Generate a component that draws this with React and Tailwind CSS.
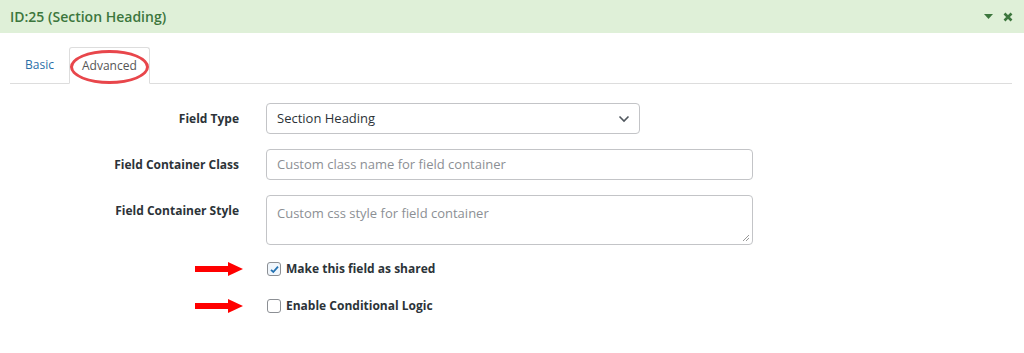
import React from 'react';

function Arrow() {
    return (
        <svg width="48" height="14" viewBox="0 0 48 14" className="block">
            <rect x="0" y="4" width="34" height="6" fill="#ff0000" />
            <polygon points="33,0 48,7 33,14" fill="#ff0000" />
        </svg>
    );
}

function CheckRow({ checked, label }) {
    return (
        <div className="flex items-center h-[20px]">
            <div className="w-[233px] flex justify-end">
                <Arrow />
            </div>
            <div className="ml-[24px] flex items-center gap-[5px]">
                <span
                    className={
                        'w-[14px] h-[14px] rounded-[3px] border flex items-center justify-center ' +
                        (checked ? 'border-[#8c8f94] bg-[#f0f6fc]' : 'border-[#8c8f94] bg-white')
                    }
                >
                    {checked && (
                        <svg width="11" height="11" viewBox="0 0 11 11">
                            <path d="M2 5.8 L4.3 8 L9 2.6" fill="none" stroke="#2271b1" strokeWidth="1.8" />
                        </svg>
                    )}
                </span>
                <span className="text-[12px] font-bold text-[#2c3338]">{label}</span>
            </div>
        </div>
    );
}

function FieldRow({ label, children, top }) {
    return (
        <div className={'flex ' + (top ? 'items-start' : 'items-center')}>
            <label
                className={
                    'w-[229px] text-right text-[12px] font-bold text-[#2c3338] ' + (top ? 'pt-[7px]' : '')
                }
            >
                {label}
            </label>
            <div className="ml-[27px]">{children}</div>
        </div>
    );
}

export default function App() {
    return (
        <div className="w-[1024px] h-[353px] bg-white overflow-hidden" style={{ fontFamily: '"Open Sans", sans-serif' }}>
            <div className="h-[33px] bg-[#dff0d8] flex items-center justify-between pl-[10px] pr-[11px]">
                <span className="text-[14px] font-semibold text-[#3c763d]">ID:25 (Section Heading)</span>
                <div className="flex items-center gap-[10px] text-[#3c763d]">
                    <svg width="9" height="6" viewBox="0 0 9 6">
                        <polygon points="0,0 9,0 4.5,5" fill="#3c763d" />
                    </svg>
                    <svg width="10" height="10" viewBox="0 0 10 10">
                        <path d="M1.5 1.5 L8.5 8.5 M8.5 1.5 L1.5 8.5" stroke="#3c763d" strokeWidth="2.6" />
                    </svg>
                </div>
            </div>

            <div className="px-[10px] pt-[15px]">
                <div className="flex items-end border-b border-[#dddddd] h-[36px] w-[1002px]">
                    <div className="px-[15px] h-[36px] flex items-center text-[12px] text-[#2a6fa8]">Basic</div>
                    <div className="relative mb-[-1px] h-[37px] w-[81px] border border-[#dddddd] border-b-white bg-white rounded-t-[3px] flex items-center justify-center text-[12px] text-[#555555]">
                        Advanced
                        <span className="absolute left-[0px] top-[2px] w-[79px] h-[34px] rounded-[50%] border-[3px] border-[#e8464b]"></span>
                    </div>
                </div>

                <div className="pt-[19px] flex flex-col gap-[15px]">
                    <FieldRow label="Field Type">
                        <div className="w-[374px] h-[31px] border border-[#c3c4c7] rounded-[4px] flex items-center justify-between pl-[10px] pr-[9px]">
                            <span className="text-[13px] text-[#2c3338]">Section Heading</span>
                            <svg width="12" height="8" viewBox="0 0 12 8">
                                <path d="M1.5 1.5 L6 6 L10.5 1.5" fill="none" stroke="#50575e" strokeWidth="1.6" />
                            </svg>
                        </div>
                    </FieldRow>
                    <FieldRow label="Field Container Class">
                        <div className="w-[487px] h-[31px] border border-[#c3c4c7] rounded-[4px] flex items-center pl-[10px]">
                            <span className="text-[13px] text-[#8c8f94]">Custom class name for field container</span>
                        </div>
                    </FieldRow>
                    <FieldRow label="Field Container Style" top>
                        <div className="relative w-[487px] h-[50px] border border-[#c3c4c7] rounded-[4px] pl-[10px] pt-[4px]">
                            <span className="text-[13px] text-[#8c8f94]">Custom css style for field container</span>
                            <svg width="8" height="8" viewBox="0 0 8 8" className="absolute right-[2px] bottom-[2px]">
                                <path d="M7 1 L1 7 M7 4 L4 7" stroke="#999999" strokeWidth="1" />
                            </svg>
                        </div>
                    </FieldRow>
                </div>

                <div className="pt-[14px] flex flex-col gap-[17px]">
                    <CheckRow checked label="Make this field as shared" />
                    <CheckRow label="Enable Conditional Logic" />
                </div>
            </div>
        </div>
    );
}
